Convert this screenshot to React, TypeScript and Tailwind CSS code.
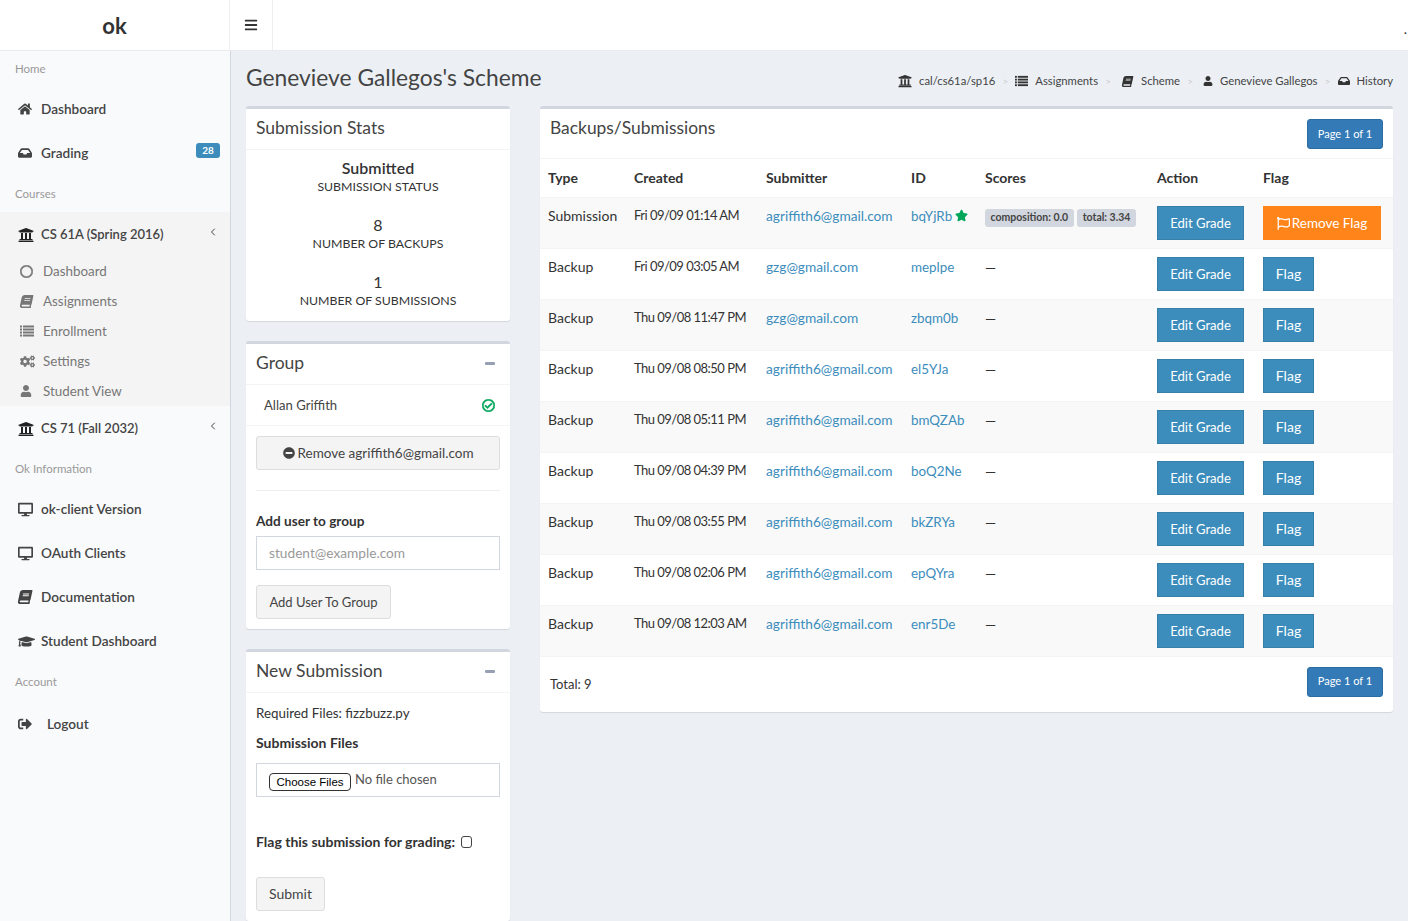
import React from 'react';
import { FaHome, FaInbox, FaUniversity, FaDesktop, FaBook, FaGraduationCap, FaSignOutAlt, FaRegCircle, FaCogs, FaUser, FaRegFlag, FaMinusCircle, FaRegCheckCircle, FaStar, FaBars } from 'react-icons/fa';
import { ChevronLeft } from 'lucide-react';

const font = "font-['Lato','Noto_Sans',sans-serif]";

function BookIcon({ className = '' }: { className?: string }) {
  return <FaBook className={`-skew-x-12 ${className}`} />;
}

function ListIcon({ className = '' }: { className?: string }) {
  return (
    <svg viewBox="0 0 14 12" fill="currentColor" className={className} width="14" height="12">
      {[0.5, 3.5, 6.5, 9.5].map((y) => (
        <g key={y}>
          <rect x="0" y={y} width="2" height="2" />
          <rect x="3" y={y} width="11" height="2" />
        </g>
      ))}
    </svg>
  );
}

function NavLabel({ children, h = 'h-[37px]' }: { children: React.ReactNode; h?: string }) {
  return <div className={`${h} flex items-center pl-[15px] text-[11.5px] text-[#999]`}>{children}</div>;
}

function NavItem({ icon, children, gap = 'w-[41px]', right, textClass = 'text-[13.6px]' }: { icon: React.ReactNode; children: React.ReactNode; gap?: string; right?: React.ReactNode; textClass?: string }) {
  return (
    <div className={`relative h-[44px] flex items-center font-semibold text-[#444] ${textClass}`}>
      <span className={`${gap} pl-[18px] shrink-0 flex items-center text-[14px]`}>{icon}</span>
      <span>{children}</span>
      {right}
    </div>
  );
}

function SubItem({ icon, children }: { icon: React.ReactNode; children: React.ReactNode }) {
  return (
    <div className="h-[30px] flex items-center text-[13.4px] text-[#777]">
      <span className="w-[43px] pl-[20px] shrink-0 flex items-center text-[13px]">{icon}</span>
      <span>{children}</span>
    </div>
  );
}

function Sidebar() {
  const chevron = <ChevronLeft size={12} strokeWidth={2} className="absolute right-[11px] top-[14px] text-[#444]" />;
  return (
    <aside className="w-[231px] shrink-0 bg-[#f9fafc] border-r border-[#d2d6de] flex flex-col">
      <NavLabel h="h-[36px]">Home</NavLabel>
      <NavItem icon={<FaHome />}>Dashboard</NavItem>
      <NavItem icon={<FaInbox />} right={<span className="absolute right-[10px] top-[12px] h-[15px] w-[24px] rounded-[3px] bg-[#3c8dbc] text-white text-[10px] font-bold flex items-center justify-center">28</span>}>Grading</NavItem>
      <NavLabel>Courses</NavLabel>
      <div className="bg-[#f4f4f4]">
        <NavItem textClass="text-[13px] pt-[1px]" icon={<FaUniversity className="text-[16px] text-[#222]" />} right={chevron}>CS 61A (Spring 2016)</NavItem>
        <SubItem icon={<FaRegCircle className="stroke-[24] stroke-current" />}>Dashboard</SubItem>
        <SubItem icon={<BookIcon />}>Assignments</SubItem>
        <SubItem icon={<ListIcon />}>Enrollment</SubItem>
        <SubItem icon={<FaCogs className="text-[15px]" />}>Settings</SubItem>
        <SubItem icon={<FaUser className="text-[12px]" />}>Student View</SubItem>
      </div>
      <NavItem textClass="text-[13px] pt-[1px]" icon={<FaUniversity className="text-[16px] text-[#222]" />} right={chevron}>CS 71 (Fall 2032)</NavItem>
      <NavLabel>Ok Information</NavLabel>
      <NavItem icon={<FaDesktop className="text-[15px]" />}>ok-client Version</NavItem>
      <NavItem icon={<FaDesktop className="text-[15px]" />}>OAuth Clients</NavItem>
      <NavItem icon={<BookIcon />}>Documentation</NavItem>
      <NavItem icon={<FaGraduationCap className="text-[17px]" />}>Student Dashboard</NavItem>
      <NavLabel>Account</NavLabel>
      <div className="h-[2px]" />
      <NavItem icon={<FaSignOutAlt />} gap="w-[47px]">Logout</NavItem>
    </aside>
  );
}

function Panel({ title, collapse, children, className = '' }: { title: string; collapse?: boolean; children: React.ReactNode; className?: string }) {
  return (
    <section className={`bg-white border-t-[3px] border-[#d2d6de] rounded-[3px] shadow-[0_1px_1px_rgba(0,0,0,0.1)] ${className}`}>
      <div className="h-[41px] flex items-center justify-between pl-[10px] pr-[15px] pb-[2px] text-[17.5px] text-[#444] border-b border-[#f4f4f4]">
        <span>{title}</span>
        {collapse && <span className="w-[10px] h-[3px] rounded-[1px] bg-[#97a0b3]" />}
      </div>
      {children}
    </section>
  );
}

function Stat({ a, b, bold }: { a: string; b: string; bold?: boolean }) {
  return (
    <div className="h-[57px] pt-[8px] text-center text-[#333]">
      <div className={`text-[16px] leading-[20px] ${bold ? 'font-semibold' : ''}`}>{a}</div>
      <div className="text-[12.3px] leading-[18px]">{b}</div>
    </div>
  );
}

const grayBtn = 'h-[34px] rounded-[3px] border border-[#ddd] bg-[#f4f4f4] text-[#444] flex items-center justify-center';

function LeftColumn() {
  return (
    <div className="w-[264px] shrink-0 flex flex-col gap-[20px]">
      <Panel title="Submission Stats">
        <div>
          <Stat a="Submitted" b="SUBMISSION STATUS" bold />
          <Stat a="8" b="NUMBER OF BACKUPS" />
          <Stat a="1" b="NUMBER OF SUBMISSIONS" />
        </div>
      </Panel>
      <Panel title="Group" collapse>
        <div className="h-[41px] flex items-center justify-between pl-[18px] pr-[15px] text-[13.1px] text-[#444] border-b border-[#f4f4f4]">
          <span className="mt-[1px]">Allan Griffith</span>
          <FaRegCheckCircle className="text-[13px] text-[#00a65a] stroke-[24] stroke-current" />
        </div>
        <div className="px-[10px] pt-[10px] pb-[10px]">
          <div className={`${grayBtn} text-[13.5px] gap-[3px]`}><FaMinusCircle className="text-[12px]" />Remove agriffith6@gmail.com</div>
          <div className="h-px bg-[#eee] mt-[20px] mb-[22px]" />
          <div className="text-[13.6px] font-bold text-[#333] leading-[16px]">Add user to group</div>
          <input readOnly placeholder="student@example.com" className="mt-[7px] block w-full h-[34px] border border-[#d2d6de] px-[12px] pb-[2px] text-[13.7px] placeholder:text-[#999] outline-none" />
          <div className={`${grayBtn} text-[13px] pt-[1px] mt-[15px] w-[135px]`}>Add User To Group</div>
        </div>
      </Panel>
      <Panel title="New Submission" collapse>
        <div className="px-[10px] pt-[10px] pb-[10px] text-[14px] text-[#333]">
          <div className="leading-[20px] text-[13.4px]">Required Files: fizzbuzz.py</div>
          <div className="mt-[10px] font-bold leading-[20px]">Submission Files</div>
          <div className="mt-[10px] h-[34px] border border-[#d2d6de] pl-[12px] flex items-center text-[#555]">
            <input type="file" multiple className="text-[13px] file:mr-[4px] file:h-[18px] file:w-[82px] file:rounded-[4px] file:border file:border-[#333] file:bg-white file:text-[11.5px] file:text-black file:align-[-2px] file:font-['Liberation_Sans',sans-serif]" />
          </div>
          <div className="mt-[35px] h-[20px] flex items-center gap-[6px] font-bold">
            <span className="-mt-[1px]">Flag this submission for grading:</span>
            <input type="checkbox" className="appearance-none w-[11px] h-[12px] border border-[#444] rounded-[3px] bg-white" />
          </div>
          <div className={`${grayBtn} text-[14px] pb-[2px] mt-[25px] w-[69px]`}>Submit</div>
        </div>
      </Panel>
    </div>
  );
}

const rows = [
  ['Backup', 'Fri 09/09 03:05 AM', 'gzg@gmail.com', 'meplpe'],
  ['Backup', 'Thu 09/08 11:47 PM', 'gzg@gmail.com', 'zbqm0b'],
  ['Backup', 'Thu 09/08 08:50 PM', 'agriffith6@gmail.com', 'el5YJa'],
  ['Backup', 'Thu 09/08 05:11 PM', 'agriffith6@gmail.com', 'bmQZAb'],
  ['Backup', 'Thu 09/08 04:39 PM', 'agriffith6@gmail.com', 'boQ2Ne'],
  ['Backup', 'Thu 09/08 03:55 PM', 'agriffith6@gmail.com', 'bkZRYa'],
  ['Backup', 'Thu 09/08 02:06 PM', 'agriffith6@gmail.com', 'epQYra'],
  ['Backup', 'Thu 09/08 12:03 AM', 'agriffith6@gmail.com', 'enr5De'],
];

const blueBtn = 'flex h-[34px] items-center justify-center bg-[#3c8dbc] border border-[#367fa9] text-white';
const pageBtn = 'h-[30px] w-[76px] rounded-[3px] bg-[#337ab7] border border-[#2e6da4] text-white text-[11px] flex items-center justify-center';
const cell = 'align-top pl-[8px] h-[51px] border-b border-[#f4f4f4]';
const td = `${cell} pt-[8px]`;
const typeCell = `${cell} pt-[7px]`;
const dateCell = `${cell} pt-[8px] whitespace-nowrap text-[13px] tracking-[-0.52px]`;
const link = `${td} whitespace-nowrap text-[#3c8dbc] text-[13.7px]`;
const idCell = `${td} whitespace-nowrap text-[#3c8dbc] text-[13.4px]`;

function BackupTable() {
  return (
    <table className="w-full table-fixed border-collapse text-[14px] text-[#333]">
      <colgroup>
        <col className="w-[86px]" />
        <col className="w-[132px]" />
        <col className="w-[145px]" />
        <col className="w-[74px]" />
        <col className="w-[172px]" />
        <col className="w-[106px]" />
        <col />
      </colgroup>
      <thead>
        <tr className="h-[38px] text-left font-bold">
          {['Type', 'Created', 'Submitter', 'ID', 'Scores', 'Action', 'Flag'].map((h) => (
            <th key={h} className="pl-[8px] font-bold border-b border-[#f4f4f4]">{h}</th>
          ))}
        </tr>
      </thead>
      <tbody>
        <tr className="bg-[#f9f9f9]">
          <td className={typeCell}>Submission</td>
          <td className={dateCell}>Fri 09/09 01:14 AM</td>
          <td className={link}>agriffith6@gmail.com</td>
          <td className={idCell}>
            <span className="inline-flex items-center gap-[3px]">bqYjRb<FaStar className="text-[13px] text-[#00a65a]" /></span>
          </td>
          <td className={td}>
            <div className="flex gap-[3px] pt-[3px]">
              <span className="h-[18px] px-[5.5px] rounded-[3px] bg-[#d2d6de] text-[10.5px] font-bold text-[#444] flex items-center whitespace-nowrap">composition: 0.0</span>
              <span className="h-[18px] px-[6px] rounded-[3px] bg-[#d2d6de] text-[10.5px] font-bold text-[#444] flex items-center whitespace-nowrap">total: 3.34</span>
            </div>
          </td>
          <td className={`${td} text-[13.1px]`}><span className={`${blueBtn} pt-[2px] w-[87px]`}>Edit Grade</span></td>
          <td className={td}>
            <span className="flex h-[34px] w-[118px] pt-[1px] items-center justify-center gap-[2px] bg-[#ff851b] text-white text-[13.5px]"><FaRegFlag className="text-[13px]" />Remove Flag</span>
          </td>
        </tr>
        {rows.map((r, i) => (
          <tr key={r[3]} className={i % 2 === 1 ? 'bg-[#f9f9f9]' : ''}>
            <td className={typeCell}>{r[0]}</td>
            <td className={dateCell}>{r[1]}</td>
            <td className={link}>{r[2]}</td>
            <td className={idCell}>{r[3]}</td>
            <td className={td}>—</td>
            <td className={`${td} text-[13.1px]`}><span className={`${blueBtn} pt-[2px] w-[87px]`}>Edit Grade</span></td>
            <td className={td}><span className={`${blueBtn} w-[51px]`}>Flag</span></td>
          </tr>
        ))}
      </tbody>
    </table>
  );
}

function Crumb({ icon, iconW, children, sep = true }: { icon: React.ReactNode; iconW: string; children: React.ReactNode; sep?: boolean }) {
  return (
    <span className="flex items-center">
      <span className={`${iconW} text-[13px] text-[#333] flex items-center`}>{icon}</span>
      <span className="text-[#444]">{children}</span>
      {sep && <span className="w-[20px] text-center text-[#ccc] text-[10px]">&gt;</span>}
    </span>
  );
}

export default function App() {
  return (
    <div className={`${font} h-[921px] w-[1408px] overflow-hidden bg-[#ecf0f5] flex flex-col`}>
      <header className="h-[51px] shrink-0 bg-white border-b border-[#e8ebf0] flex items-stretch">
        <div className="w-[230px] border-r border-[#eee] flex items-center justify-center text-[22px] font-bold text-[#333]"><span className="mt-[1px]">ok</span></div>
        <div className="w-[43px] border-r border-[#eee] flex items-center justify-center text-[#333]"><FaBars className="text-[14px]" /></div>
        <div className="ml-auto pr-[1px] pt-[18px] text-[14px] text-[#333]">.</div>
      </header>
      <div className="flex-1 flex min-h-0">
        <Sidebar />
        <main className="flex-1 pl-[15px] pr-[15px] min-w-0">
          <div className="h-[55px] flex items-center justify-between">
            <h1 className="text-[22.8px] text-[#444] -mt-[2px]">Genevieve Gallegos's Scheme</h1>
            <nav className="flex items-center text-[11.3px] mt-[5px]">
              <Crumb iconW="w-[21px]" icon={<FaUniversity className="text-[14px]" />}>cal/cs61a/sp16</Crumb>
              <Crumb iconW="w-[20px]" icon={<ListIcon className="w-[13px]" />}>Assignments</Crumb>
              <Crumb iconW="w-[23px]" icon={<BookIcon className="text-[11px] ml-[4px]" />}>Scheme</Crumb>
              <Crumb iconW="w-[20px]" icon={<FaUser className="text-[10px] ml-[3px]" />}>Genevieve Gallegos</Crumb>
              <Crumb iconW="w-[19px]" icon={<FaInbox className="text-[12px] ml-[1px]" />} sep={false}>History</Crumb>
            </nav>
          </div>
          <div className="flex gap-[30px] items-start">
            <LeftColumn />
            <section className="flex-1 min-w-0 bg-white border-t-[3px] border-[#d2d6de] rounded-[3px] shadow-[0_1px_1px_rgba(0,0,0,0.1)]">
              <div className="h-[50px] flex justify-between pl-[10px] pr-[10px] border-b border-[#f4f4f4]">
                <span className="text-[17.4px] text-[#444] pt-[6px]">Backups/Submissions</span>
                <span className={`${pageBtn} mt-[10px]`}>Page 1 of 1</span>
              </div>
              <BackupTable />
              <div className="h-[55px] flex items-start justify-between pl-[10px] pr-[10px] pt-[10px] text-[13px] text-[#333]">
                <span className="pt-[8px]">Total: 9</span>
                <span className={pageBtn}>Page 1 of 1</span>
              </div>
            </section>
          </div>
        </main>
      </div>
    </div>
  );
}
